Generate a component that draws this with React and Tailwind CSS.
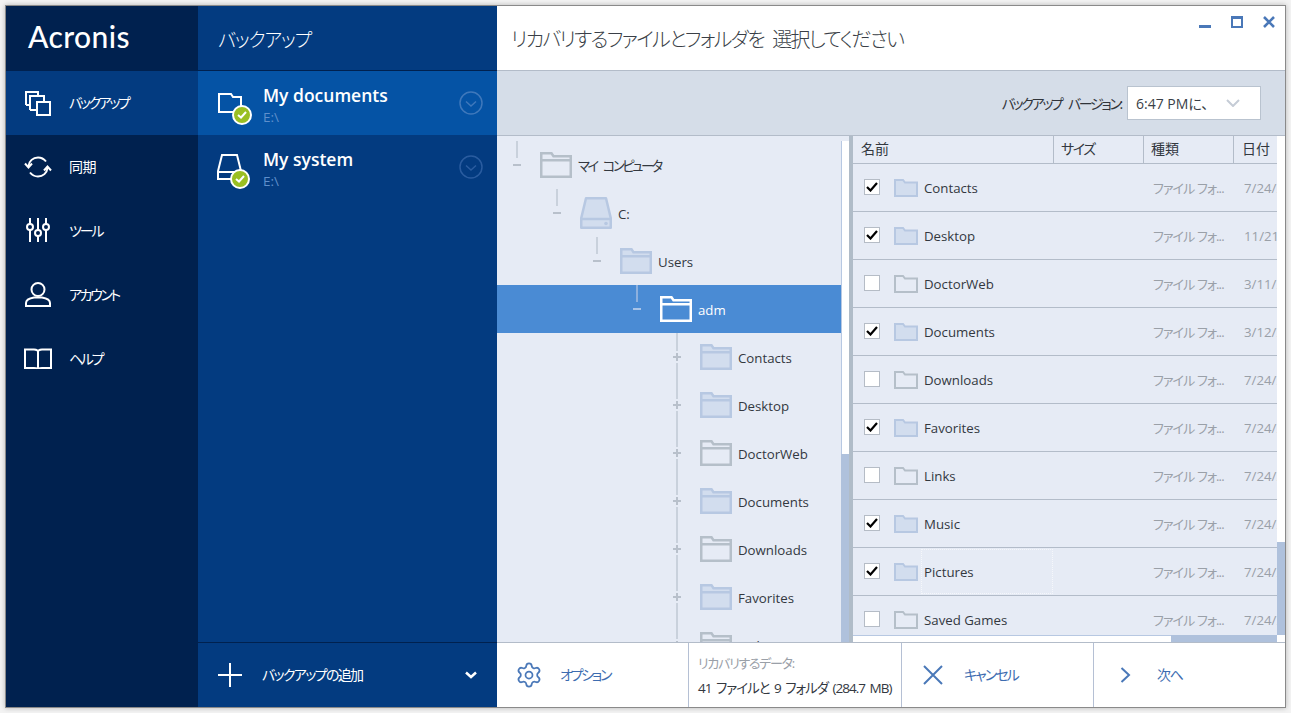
import React from "react";
import { Settings } from "lucide-react";

const LAT = "font-['Open_Sans','Noto_Sans_CJK_JP',sans-serif] [font-feature-settings:'palt']";

function FolderTree({ kind }) {
  const cls =
    kind === "fill" ? "fill-[#d2ddee] stroke-[#b7c8e2]" : kind === "white" ? "fill-none stroke-white" : "fill-none stroke-[#b5bfc9]";
  return (
    <svg width="32" height="26" viewBox="0 0 32 26" className="shrink-0">
      <path d="M1.25 24.75V1.25H11.5L13.5 4.25H30.75V24.75Z M1.25 8.25H30.75" strokeWidth="2.5" className={cls} />
    </svg>
  );
}

function Drive() {
  return (
    <svg width="32" height="32" viewBox="0 0 32 32" className="shrink-0">
      <path d="M6 1.25H26L30.75 21V30.75H1.25V21Z" fill="#d2ddee" stroke="#b7c8e2" strokeWidth="2.5" strokeLinejoin="round" />
      <path d="M1.25 22H30.75" stroke="#b7c8e2" strokeWidth="2.5" />
      <circle cx="26" cy="26.5" r="1.8" fill="#b7c8e2" />
    </svg>
  );
}

function FolderList({ fill }) {
  return (
    <svg width="24" height="18" viewBox="0 0 24 18" className="shrink-0">
      <path
        d="M1 17V1H9L11 3.5H23V17Z"
        strokeWidth="2"
        className={fill ? "fill-[#d2ddee] stroke-[#b7c8e2]" : "fill-none stroke-[#b5bfc9]"}
      />
    </svg>
  );
}

function Connector({ plus, selected }) {
  const c = selected ? "#8db0de" : "#c9d1dc";
  const d = selected ? "#a9c4e8" : "#b8c0cb";
  return (
    <svg width="43" height="48" viewBox="0 0 43 48" className="shrink-0">
      {plus ? (
        <>
          <path d="M20 0V18M20 30V48" stroke={c} strokeWidth="2" />
          <path d="M16 24H24M20 20V28" stroke={d} strokeWidth="2" />
        </>
      ) : (
        <>
          <path d="M20 0V17" stroke={c} strokeWidth="2" />
          <path d="M16 24H24" stroke={d} strokeWidth="2" />
        </>
      )}
    </svg>
  );
}

const tree = [
  { label: "マイ コンピュータ", pad: "pl-0", icon: "plain", track: "tracking-[-2.4px] [word-spacing:5px] -ml-[1px]" },
  { label: "C:", pad: "pl-[40px]", icon: "drive" },
  { label: "Users", pad: "pl-[80px]", icon: "fill" },
  { label: "adm", pad: "pl-[120px]", icon: "white", selected: true },
  { label: "Contacts", pad: "pl-[160px]", icon: "fill", plus: true },
  { label: "Desktop", pad: "pl-[160px]", icon: "fill", plus: true },
  { label: "DoctorWeb", pad: "pl-[160px]", icon: "plain", plus: true },
  { label: "Documents", pad: "pl-[160px]", icon: "fill", plus: true },
  { label: "Downloads", pad: "pl-[160px]", icon: "plain", plus: true },
  { label: "Favorites", pad: "pl-[160px]", icon: "fill", plus: true },
  { label: "Links", pad: "pl-[160px]", icon: "plain", plus: true },
];

const files = [
  ["Contacts", true, "7/24/2015"],
  ["Desktop", true, "11/21/2015"],
  ["DoctorWeb", false, "3/11/2015"],
  ["Documents", true, "3/12/2015"],
  ["Downloads", false, "7/24/2015"],
  ["Favorites", true, "7/24/2015"],
  ["Links", false, "7/24/2015"],
  ["Music", true, "7/24/2015"],
  ["Pictures", true, "7/24/2015"],
  ["Saved Games", false, "7/24/2015"],
];

const white = { fill: "none", stroke: "white", strokeWidth: 2 };

const navItems = [
  {
    label: "バックアップ",
    active: true,
    track: "tracking-[-2.4px]",
    icon: (
      <svg width="26" height="26" viewBox="0 0 26 26" {...white}>
        <path d="M1 15V2H13V6" />
        <path d="M1 15H5" />
        <path d="M5 20V6H19V12" />
        <path d="M5 20H12" />
        <path d="M12 12H25V25H12Z" />
      </svg>
    ),
  },
  {
    label: "同期",
    track: "tracking-[-0.4px]",
    icon: (
      <svg width="28" height="22" viewBox="0 0 28 22" {...white}>
        <path d="M4.5 10C5 5 9 1.5 14 1.5C17.5 1.5 20 3 22 5.5" />
        <path d="M23.5 12C23 17 19 20.5 14 20.5C10.5 20.5 8 19 6 16.5" />
        <path d="M1 7.5L4.5 11.5L8 7.5" />
        <path d="M20 14.5L23.5 10.5L27 14.5" />
      </svg>
    ),
  },
  {
    label: "ツール",
    track: "tracking-[-2.1px]",
    icon: (
      <svg width="24" height="26" viewBox="0 0 24 26" {...white}>
        <path d="M4 0V6M4 12V24M12 0V12M12 18V24M20 0V6M20 12V24" />
        <circle cx="4" cy="9" r="3" />
        <circle cx="12" cy="15" r="3" />
        <circle cx="20" cy="9" r="3" />
      </svg>
    ),
  },
  {
    label: "アカウント",
    track: "tracking-[-2.4px]",
    icon: (
      <svg width="26" height="25" viewBox="0 0 26 25" {...white}>
        <ellipse cx="13" cy="7.5" rx="6.5" ry="6.5" />
        <path d="M1 24V21C1 17.5 6 16 9 15.5H17C20 16 25 17.5 25 21V24Z" />
      </svg>
    ),
  },
  {
    label: "ヘルプ",
    track: "tracking-[-2.4px]",
    icon: (
      <svg width="28" height="22" viewBox="0 0 28 22" {...white}>
        <path d="M1 1.5H10C12 1.5 14 2.5 14 4V21C14 20 12 20 10 20H1Z" />
        <path d="M27 1.5H18C16 1.5 14 2.5 14 4V21C14 20 16 20 18 20H27Z" />
      </svg>
    ),
  },
];

function Badge({ pos }) {
  return (
    <span className={`absolute ${pos} w-5 h-5 rounded-full bg-[#9abf22] border-2 border-white flex items-center justify-center`}>
      <svg width="10" height="8" viewBox="0 0 10 8" fill="none" stroke="white" strokeWidth="2">
        <path d="M1 4L4 6.5L9 1" />
      </svg>
    </span>
  );
}

function Backup({ title, active, icon, box, pos }) {
  return (
    <div className={`h-16 flex items-start pr-[14px] ${active ? "bg-[#0553a5]" : ""}`}>
      <div className="w-[65px] shrink-0">
        <div className={`relative ${box}`}>{icon}<Badge pos={pos} /></div>
      </div>
      <div className="flex-1 mt-[11px]">
        <div className="text-[17.5px] leading-[26px] font-semibold text-white font-['Open_Sans',sans-serif]">{title}</div>
        <div className="text-[13.5px] leading-[16px] mt-[1px] text-[#5f8fcb] font-['Open_Sans',sans-serif]">E:\</div>
      </div>
      <svg width="24" height="24" viewBox="0 0 24 24" fill="none" stroke={active ? "#3f78bb" : "#2a5c9f"} strokeWidth="1.5" className="mt-[20px]">
        <circle cx="12" cy="12" r="11" />
        <path d="M7 10.5L12 15L17 10.5" />
      </svg>
    </div>
  );
}

function Footer({ icon, label, wide, track }) {
  return (
    <div className={`h-full flex items-center ${wide} border-l border-[#b5c0d4] text-[#3d6cb0] text-[14px] ${track} ${LAT}`}>
      {icon}
      <span className="pb-[2px]">{label}</span>
    </div>
  );
}

export default function App() {
  return (
    <div className="w-[1291px] h-[713px] bg-[#f3f3f3] pl-[5px] pt-[5px] overflow-hidden">
      <div className="w-[1281px] h-[703px] border border-[#8a8a8a] flex bg-white shadow-[0_0_5px_rgba(0,0,0,0.25)]">
        {/* sidebar */}
        <div className="w-[192px] shrink-0 bg-[#00214f] flex flex-col">
          <div className="h-[65px] flex items-center pl-[22px] pb-[5px] text-white text-[30px] font-medium tracking-[0.4px] font-['Lato',sans-serif]">
            Acronis
          </div>
          {navItems.map((n) => (
            <div key={n.label} className={`h-16 flex items-center ${n.active ? "bg-[#033b80]" : ""}`}>
              <div className="w-[63px] flex justify-center shrink-0 pb-[1px]">{n.icon}</div>
              <span className={`text-white text-[14px] pb-[2px] ${n.track} ${LAT}`}>{n.label}</span>
            </div>
          ))}
        </div>

        {/* backups */}
        <div className="w-[299px] shrink-0 bg-[#033b80] flex flex-col">
          <div className={`h-[65px] shrink-0 border-b border-[#00214f] flex items-center pl-[20px] pt-[4px] text-white text-[19px] font-light tracking-[-1.2px] ${LAT}`}>
            バックアップ
          </div>
          <Backup
            title="My documents"
            active
            box="ml-[20px] mt-[22px] w-[24px] h-[20px]"
            pos="-right-[10px] -bottom-[12px]"
            icon={
              <svg width="24" height="20" viewBox="0 0 24 20" fill="none" stroke="white" strokeWidth="2" className="block">
                <path d="M1 19V1H13L15 4H23V19Z" />
              </svg>
            }
          />
          <Backup
            title="My system"
            box="ml-[19px] mt-[19px] w-[25px] h-[26px]"
            pos="-right-[8px] -bottom-[9px]"
            icon={
              <svg width="25" height="26" viewBox="0 0 25 26" fill="none" stroke="white" strokeWidth="2" className="block">
                <path d="M5 1H20L24 17V25H1V17Z M1 18H24" />
              </svg>
            }
          />
          <div className="flex-1" />
          <div className="h-[65px] shrink-0 border-t border-[#00214f] flex items-center pl-[19px] pr-[20px] text-white">
            <svg width="26" height="26" viewBox="0 0 26 26" stroke="white" strokeWidth="2">
              <path d="M13 1V25M1 13H25" />
            </svg>
            <span className={`ml-[19px] flex-1 text-[14px] pb-[2px] tracking-[-1.65px] ${LAT}`}>バックアップの追加</span>
            <svg width="12" height="8" viewBox="0 0 12 8" fill="none" stroke="white" strokeWidth="2.5">
              <path d="M1 1.5L6 6L11 1.5" />
            </svg>
          </div>
        </div>

        {/* main */}
        <div className="w-[788px] shrink-0 flex flex-col">
          <div className="h-[65px] shrink-0 border-b border-[#b3bcc9] bg-white flex justify-between">
            <div className={`pl-[14px] pt-[19px] text-[#3a3f47] text-[20px] leading-[30px] font-light tracking-[-1.75px] [word-spacing:5px] ${LAT}`}>
              リカバリするファイルとフォルダを 選択してください
            </div>
            <div className="flex items-start pt-[10px] pr-[10px] gap-[20px]">
              <svg width="12" height="12" viewBox="0 0 12 12" fill="#4a78b8"><path d="M0 9H12V12H0Z" /></svg>
              <svg width="12" height="12" viewBox="0 0 12 12" fill="none" stroke="#4a78b8" strokeWidth="2"><path d="M1 1H11V11H1Z M1 2H11" strokeWidth="2" /></svg>
              <svg width="12" height="12" viewBox="0 0 12 12" fill="none" stroke="#4a78b8" strokeWidth="2.6"><path d="M1 1L11 11M11 1L1 11" /></svg>
            </div>
          </div>

          <div className="h-[65px] shrink-0 bg-[#d5dde8] border-b border-[#b3bcc9] flex items-center justify-end pr-[24px]">
            <span className={`text-[14px] tracking-[-2.3px] [word-spacing:5px] text-[#30343a] mr-[6px] ${LAT}`}>バックアップ バージョン:</span>
            <div className="w-[134px] h-[34px] bg-white border border-[#b9c3cf] flex items-center pl-[8px]">
              <span className={`text-[14px] text-[#3a3f47] w-[90px] ${LAT}`}>6:47 PMに、</span>
              <svg width="14" height="8" viewBox="0 0 14 8" fill="none" stroke="#c5ccd6" strokeWidth="2">
                <path d="M1 1L7 7L13 1" />
              </svg>
            </div>
          </div>

          <div className="h-[506px] shrink-0 flex bg-[#e6ebf5]">
            {/* tree */}
            <div className="w-[344px] shrink-0 overflow-hidden pt-[5px]">
              {tree.map((t) => (
                <div key={t.label} className={`h-12 flex items-center ${t.pad} ${t.selected ? "bg-[#4a8bd4] text-white" : "text-[#33383f]"}`}>
                  <Connector plus={t.plus} selected={t.selected} />
                  {t.icon === "drive" ? <Drive /> : <FolderTree kind={t.icon} />}
                  <span className={`ml-[6px] pt-[3px] text-[13.25px] whitespace-nowrap ${t.track || ""} ${LAT}`}>{t.label}</span>
                </div>
              ))}
            </div>
            <div className="w-[8px] shrink-0 flex flex-col">
              <div className="h-[5px] shrink-0" />
              <div className="h-[313px] shrink-0 bg-white border-l border-[#b7c8e2]" />
              <div className="flex-1 bg-[#afc1dc]" />
            </div>
            <div className="w-[4px] shrink-0 bg-[#b0bcc8]" />

            {/* list */}
            <div className="w-[424px] shrink-0 flex flex-col">
              <div className={`h-[28px] shrink-0 flex border-b border-[#b3bcc9] text-[14px] text-[#33383f] ${LAT}`}>
                <div className="w-[201px] pl-[8px] pb-[2px] border-r border-[#b3bcc9] flex items-center">名前</div>
                <div className="w-[90px] pl-[7px] pb-[2px] border-r border-[#b3bcc9] flex items-center tracking-[-1.5px]">サイズ</div>
                <div className="w-[90px] pl-[7px] pb-[2px] border-r border-[#b3bcc9] flex items-center">種類</div>
                <div className="flex-1 pl-[8px] pb-[2px] flex items-center">日付</div>
              </div>
              <div className="flex-1 overflow-hidden">
                {files.map(([name, on, date]) => (
                  <div key={name} className={`h-12 shrink-0 flex items-center border-b border-[#b3bcc9] text-[13.25px] ${LAT}`}>
                    <div className="w-[16px] h-[16px] ml-[11px] -mt-[1px] bg-white border border-[#b5bcc6] flex items-center justify-center shrink-0">
                      {on && (
                        <svg width="12" height="10" viewBox="0 0 12 10" fill="none" stroke="black" strokeWidth="2.2">
                          <path d="M1 5L4.5 8.5L11 1" />
                        </svg>
                      )}
                    </div>
                    <div className="ml-[14px] shrink-0 flex"><FolderList fill={on} /></div>
                    <div className={`ml-[3px] w-[132px] h-[45px] pt-[2px] flex items-center shrink-0 text-[#33383f] ${name === "Pictures" ? "pl-[2px] border border-dotted border-[#f5f7fb]" : "pl-[3px]"}`}>
                      {name}
                    </div>
                    <div className="w-[100px] shrink-0" />
                    <div className="w-[91px] shrink-0 pt-[2px] text-[#9aa0a8] text-[13px] tracking-[-0.9px] whitespace-nowrap">ファイル フォ...</div>
                    <div className="flex-1 pt-[2px] overflow-hidden whitespace-nowrap text-[#9aa0a8]">{date}</div>
                  </div>
                ))}
              </div>
              <div className="h-[7px] shrink-0 flex bg-[#afc1dc]">
                <div className="w-[318px] bg-white border-t border-[#b7c8e2]" />
              </div>
            </div>

            <div className="w-[8px] shrink-0 flex flex-col">
              <div className="h-[406px] bg-white" />
              <div className="flex-1 bg-[#afc1dc]" />
              <div className="h-[7px] bg-white" />
            </div>
          </div>

          {/* footer */}
          <div className="h-[65px] shrink-0 border-t border-[#b3bcc9] bg-white flex">
            <div className={`w-[191px] shrink-0 flex items-center pl-[18px] text-[#3d6cb0] text-[14px] tracking-[-2.3px] ${LAT}`}>
              <Settings size={28} strokeWidth={1.5} color="#4a78b8" />
              <span className="ml-[17px] pb-[2px]">オプション</span>
            </div>
            <div className={`w-[213px] shrink-0 border-l border-[#b5c0d4] pl-[9px] pt-[11px] ${LAT}`}>
              <div className="text-[13px] leading-[18px] text-[#9aa0a8] tracking-[-1.3px]">リカバリするデータ:</div>
              <div className="text-[13.5px] leading-[18px] mt-[7px] text-[#33383f] whitespace-nowrap tracking-[-1px] [word-spacing:2px]">41 ファイルと 9 フォルダ (284.7 MB)</div>
            </div>
            <Footer
              wide="w-[192px] shrink-0 pl-[21px]"
              track="tracking-[-1.9px]"
              label="キャンセル"
              icon={
                <svg width="20" height="20" viewBox="0 0 20 20" fill="none" stroke="#4a78b8" strokeWidth="2" className="mr-[21px]">
                  <path d="M1 1L19 19M19 1L1 19" />
                </svg>
              }
            />
            <Footer
              wide="flex-1 pl-[26px]"
              track="tracking-[-1.3px]"
              label="次へ"
              icon={
                <svg width="11" height="16" viewBox="0 0 11 16" fill="none" stroke="#4a78b8" strokeWidth="2" className="mr-[26px]">
                  <path d="M1.5 1L9 8L1.5 15" />
                </svg>
              }
            />
          </div>
        </div>
      </div>
    </div>
  );
}
